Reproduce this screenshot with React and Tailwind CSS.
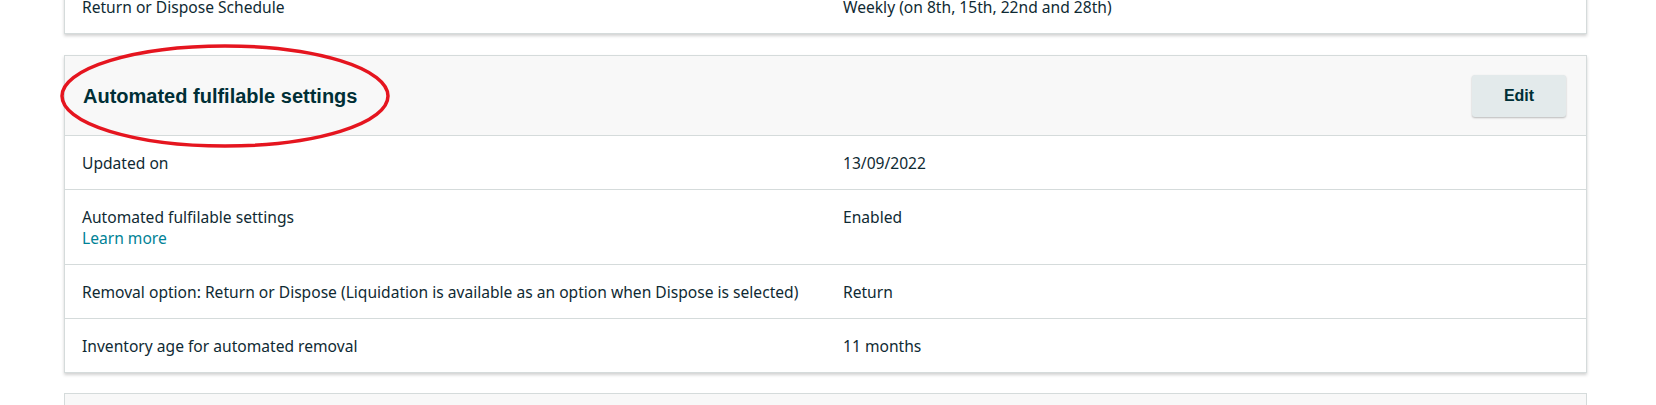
import React from "react";

const rows = [
  { label: "Updated on", value: "13/09/2022" },
  { label: "Automated fulfilable settings", value: "Enabled", link: "Learn more" },
  {
    label:
      "Removal option: Return or Dispose (Liquidation is available as an option when Dispose is selected)",
    value: "Return",
  },
  { label: "Inventory age for automated removal", value: "11 months" },
];

const Row = ({ label, value, link, last }) => (
  <div
    className={`grid grid-cols-[761px_1fr] px-[17px] pt-[17px] pb-[15px] leading-[21px] ${
      last ? "" : "border-b border-[#d5dbdb]"
    }`}
  >
    <div>
      <div>{label}</div>
      {link && <a className="block text-[#008296] cursor-pointer">{link}</a>}
    </div>
    <div>{value}</div>
  </div>
);

const App = () => {
  return (
    <div
      className="relative w-[1656px] h-[405px] overflow-hidden bg-white pl-[64px] pr-[69px] text-[15.6px] text-[#0f2a33]"
      style={{ fontFamily: '"Noto Sans", "Open Sans", sans-serif' }}
    >
      {/* Previous card (only its last row shows) */}
      <div className="-mt-[21px] bg-white border border-[#d5dbdb] shadow-[0_2px_3px_rgba(0,0,0,0.18)]">
        <div className="grid grid-cols-[761px_1fr] px-[17px] pt-[17px] pb-[15px] leading-[21px]">
          <div>Return or Dispose Schedule</div>
          <div>Weekly (on 8th, 15th, 22nd and 28th)</div>
        </div>
      </div>

      {/* Automated fulfilable settings */}
      <div className="mt-[21px] bg-white border border-[#d5dbdb] shadow-[0_2px_3px_rgba(0,0,0,0.18)]">
        <div className="flex items-center justify-between h-[80px] pl-[18px] pr-[20px] bg-[#f8f8f8] border-b border-[#d5dbdb]">
          <h2
            className="text-[20px] font-bold text-[#002f36]"
            style={{ fontFamily: '"Liberation Sans", Arial, sans-serif' }}
          >
            Automated fulfilable settings
          </h2>
          <button
            className="w-[94px] h-[42px] rounded-[3px] bg-[#e3eaeb] text-[16px] font-bold text-[#002f36] shadow-[0_1px_2px_rgba(0,0,0,0.25)]"
            style={{ fontFamily: '"Liberation Sans", Arial, sans-serif' }}
          >
            Edit
          </button>
        </div>
        {rows.map((r, i) => (
          <Row key={r.label} {...r} last={i === rows.length - 1} />
        ))}
      </div>

      {/* Next card header */}
      <div className="mt-[20px] h-[60px] bg-[#f8f8f8] border border-[#d5dbdb]" />

      {/* Red annotation ellipse */}
      <svg
        className="absolute left-[58px] top-[42px] pointer-events-none"
        width="336"
        height="110"
        viewBox="0 0 336 110"
      >
        <ellipse
          cx="167"
          cy="54"
          rx="163"
          ry="50"
          fill="none"
          stroke="#e5151f"
          strokeWidth="3.5"
        />
      </svg>
    </div>
  );
};

export default App;
